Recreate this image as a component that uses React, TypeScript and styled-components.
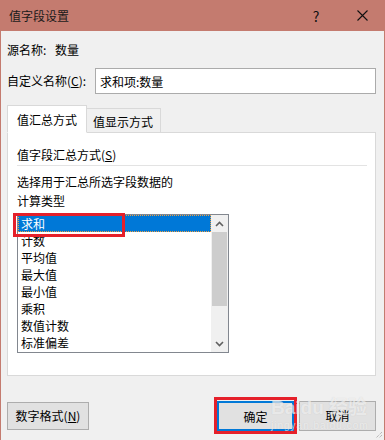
import React from 'react'
import styled, { createGlobalStyle } from 'styled-components'

const GlobalStyle = createGlobalStyle`
  html, body {
    margin: 0;
    padding: 0;
    background: #f0f0f0;
  }
  * {
    box-sizing: border-box;
  }
`

const FONT = `"Microsoft YaHei", "Noto Sans CJK SC", "Noto Sans", sans-serif`

const Window = styled.div`
  position: relative;
  width: 385px;
  height: 440px;
  background: #f0f0f0;
  border-left: 1px solid #c47b6f;
  border-right: 1px solid #c47b6f;
  font-family: ${FONT};
  font-size: 12px;
  color: #000;
  overflow: hidden;
`

const TitleBar = styled.div`
  height: 31px;
  background: #c47b6f;
  display: flex;
  align-items: center;
  padding-left: 9px;
  margin-left: -1px;
  margin-right: -1px;
`

const Title = styled.span`
  flex: 1;
  font-size: 12px;
  color: #1a1a1a;
`

const TitleButton = styled.div`
  width: 46px;
  height: 31px;
  display: flex;
  align-items: center;
  justify-content: center;
  font-size: 14px;
  color: #111;
`

const Body = styled.div`
  padding: 0 8px 0 6px;
`

const Row = styled.div<{ $top: number }>`
  display: flex;
  align-items: center;
  margin-top: ${p => p.$top}px;
`

const Label = styled.span<{ $w?: number }>`
  display: inline-block;
  line-height: 18px;
  width: ${p => (p.$w ? `${p.$w}px` : 'auto')};
  white-space: nowrap;
`

const Input = styled.div`
  flex: 1;
  height: 26px;
  background: #fff;
  border: 1px solid #ababab;
  display: flex;
  align-items: center;
  padding-left: 4px;
`

const Tabs = styled.div`
  display: flex;
  align-items: flex-end;
  margin-top: 10px;
  height: 28px;
  position: relative;
  z-index: 1;
`

const Tab = styled.div<{ $active?: boolean; $w: number }>`
  width: ${p => p.$w}px;
  height: ${p => (p.$active ? 28 : 25)}px;
  background: ${p => (p.$active ? '#fff' : '#f0f0f0')};
  border: 1px solid #d9d9d9;
  border-bottom: ${p => (p.$active ? '1px solid #fff' : '1px solid #d9d9d9')};
  ${p => (p.$active ? '' : 'border-left: none;')}
  display: flex;
  align-items: center;
  padding-left: ${p => (p.$active ? 9 : 6)}px;
  padding-top: ${p => (p.$active ? 0 : 1)}px;
  margin-bottom: -1px;
`

const Panel = styled.div`
  background: #fff;
  border: 1px solid #d9d9d9;
  height: 244px;
  padding: 13px 8px 0 9px;
`

const Separator = styled.div`
  height: 1px;
  background: #e3e3e3;
  margin-top: 1px;
`

const Para = styled.div`
  line-height: 19px;
  margin-top: 6px;
`

const ListWrap = styled.div`
  position: relative;
  margin-top: 4px;
  width: 212px;
`

const ListBox = styled.div`
  height: 139px;
  border: 1px solid #82878f;
  background: #fff;
  display: flex;
`

const Items = styled.div`
  flex: 1;
`

const Item = styled.div<{ $selected?: boolean }>`
  height: 17px;
  line-height: 17px;
  padding-left: 3px;
  background: ${p => (p.$selected ? '#0078d7' : 'transparent')};
  color: ${p => (p.$selected ? '#fff' : '#000')};
  outline: ${p => (p.$selected ? '1px dotted #f0a040' : 'none')};
  outline-offset: -1px;
`

const ScrollBar = styled.div`
  width: 17px;
  background: #f0f0f0;
  display: flex;
  flex-direction: column;
`

const Arrow = styled.div`
  height: 17px;
  display: flex;
  align-items: center;
  justify-content: center;
`

const Thumb = styled.div`
  height: 74px;
  background: #cdcdcd;
  margin: 0 1px;
`

const Track = styled.div`
  flex: 1;
`

const Annotation = styled.div`
  position: absolute;
  border: 3px solid #e5202a;
  pointer-events: none;
`

const Footer = styled.div`
  display: flex;
  align-items: center;
  justify-content: space-between;
  margin-top: 21px;
`

const Button = styled.div<{ $w: number; $h: number; $focus?: boolean }>`
  width: ${p => p.$w}px;
  height: ${p => p.$h}px;
  background: #e1e1e1;
  border: ${p => (p.$focus ? '2px solid #0078d7' : '1px solid #adadad')};
  display: flex;
  align-items: center;
  justify-content: center;
`

const RightGroup = styled.div`
  display: flex;
  align-items: center;
  gap: 2px;
`

const RedFrame = styled.div`
  border: 3px solid #e5202a;
  padding: 1px 0 0 0;
`

const U = styled.span`
  text-decoration: underline;
`

const Watermark = styled.div`
  position: absolute;
  left: 270px;
  top: 398px;
  color: rgba(255, 255, 255, 0.6);
  text-shadow: 0 0 1px rgba(140, 140, 140, 0.3);
  font-family: "Liberation Sans", "Noto Sans CJK SC", sans-serif;
  pointer-events: none;
  line-height: 1;
  white-space: nowrap;
`

const WaterBig = styled.div`
  font-size: 19px;
  font-weight: bold;
`

const WaterSmall = styled.div`
  font-size: 10px;
  margin-top: 4px;
  letter-spacing: 1px;
`

const Grip = styled.svg`
  position: absolute;
  right: 1px;
  bottom: 1px;
`

const items = ['求和', '计数', '平均值', '最大值', '最小值', '乘积', '数值计数', '标准偏差']

const App = () => {
  return (
    <>
      <GlobalStyle />
      <Window>
        <TitleBar>
          <Title>值字段设置</Title>
          <TitleButton>?</TitleButton>
          <TitleButton>
            <svg width="11" height="11" viewBox="0 0 11 11">
              <path d="M0.5 0.5 L10.5 10.5 M10.5 0.5 L0.5 10.5" stroke="#111" strokeWidth="1.1" />
            </svg>
          </TitleButton>
        </TitleBar>
        <Body>
          <Row $top={10}>
            <Label $w={48}>源名称:</Label>
            <Label>数量</Label>
          </Row>
          <Row $top={9}>
            <Label $w={88}>
              自定义名称(<U>C</U>):
            </Label>
            <Input>求和项:数量</Input>
          </Row>
          <Tabs>
            <Tab $active $w={80}>值汇总方式</Tab>
            <Tab $w={74}>值显示方式</Tab>
          </Tabs>
          <Panel>
            <Label>
              值字段汇总方式(<U>S</U>)
            </Label>
            <Separator />
            <Para>
              选择用于汇总所选字段数据的
              <br />
              计算类型
            </Para>
            <ListWrap>
              <ListBox>
                <Items>
                  {items.map((t, i) => (
                    <Item key={t} $selected={i === 0}>
                      {t}
                    </Item>
                  ))}
                </Items>
                <ScrollBar>
                  <Arrow>
                    <svg width="9" height="6" viewBox="0 0 9 6">
                      <path d="M1 5 L4.5 1.5 L8 5" stroke="#606060" strokeWidth="1.6" fill="none" />
                    </svg>
                  </Arrow>
                  <Thumb />
                  <Track />
                  <Arrow>
                    <svg width="9" height="6" viewBox="0 0 9 6">
                      <path d="M1 1 L4.5 4.5 L8 1" stroke="#606060" strokeWidth="1.6" fill="none" />
                    </svg>
                  </Arrow>
                </ScrollBar>
              </ListBox>
              <Annotation style={{ left: -4, top: -1, width: 112, height: 24 }} />
            </ListWrap>
          </Panel>
          <Footer>
            <Button $w={82} $h={28}>
              数字格式(<U>N</U>)
            </Button>
            <RightGroup>
              <RedFrame>
                <Button $w={77} $h={30} $focus>
                  确定
                </Button>
              </RedFrame>
              <Button $w={77} $h={30}>
                取消
              </Button>
            </RightGroup>
          </Footer>
        </Body>
        <Watermark>
          <WaterBig>Baidu 经验</WaterBig>
          <WaterSmall>jingyan.baidu.com</WaterSmall>
        </Watermark>
        <Grip width="8" height="8" viewBox="0 0 8 8">
          <path d="M7 1 L1 7 M7 4 L4 7" stroke="#a0a0a0" strokeWidth="1" strokeDasharray="1 1" />
        </Grip>
      </Window>
    </>
  )
}

export default App
